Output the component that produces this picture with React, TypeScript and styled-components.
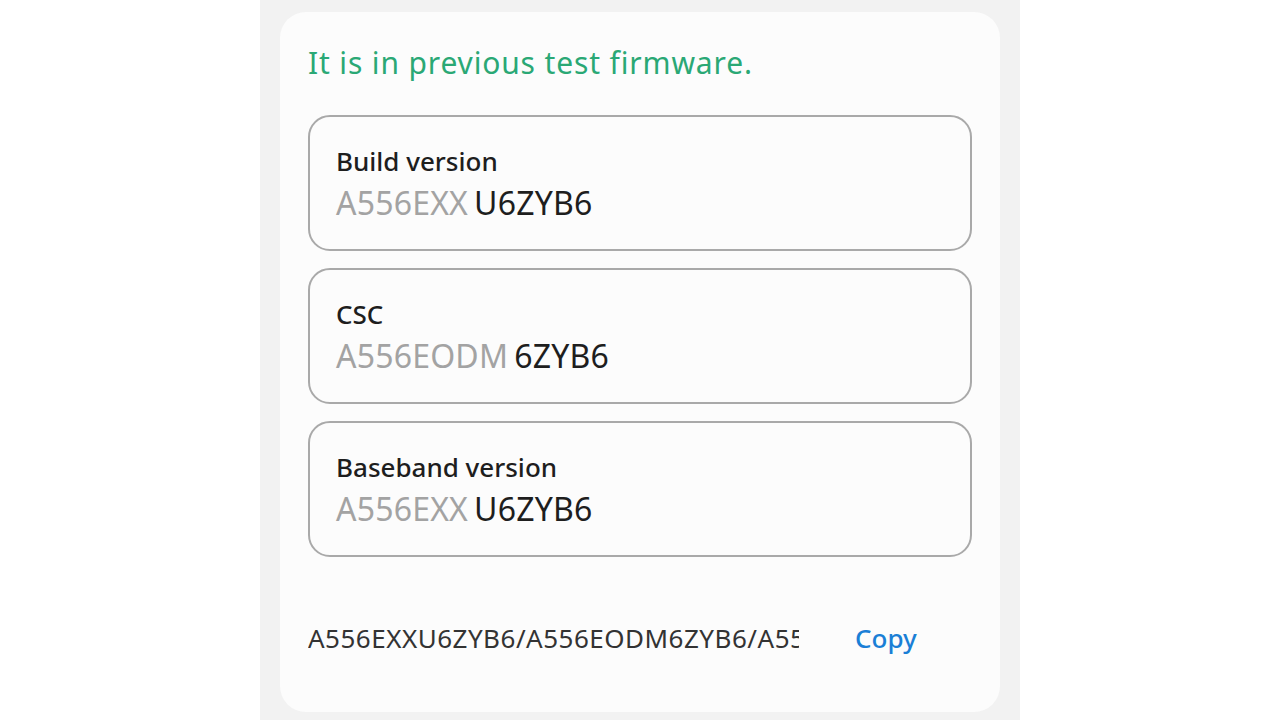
import React from "react";
import styled, { createGlobalStyle } from "styled-components";

const Global = createGlobalStyle`
  html, body { margin: 0; padding: 0; background: #ffffff; }
  body { font-family: "Noto Sans", "Open Sans", sans-serif; }
`;

const Page = styled.div`
  width: 1280px;
  height: 720px;
  display: flex;
  justify-content: center;
  overflow: hidden;
  background: #ffffff;
`;

const Column = styled.div`
  width: 760px;
  height: 720px;
  box-sizing: border-box;
  background: #f2f2f2;
  padding: 12px 20px 8px;
`;

const Card = styled.div`
  height: 700px;
  box-sizing: border-box;
  background: #fcfcfc;
  border-radius: 26px;
  padding: 31px 28px 0;
  display: flex;
  flex-direction: column;
`;

const Title = styled.div`
  color: #2aa875;
  font-size: 30px;
  line-height: 40px;
  letter-spacing: 0.85px;
  margin-bottom: 32px;
`;

const List = styled.div`
  display: flex;
  flex-direction: column;
  gap: 17px;
`;

const Box = styled.div`
  height: 136px;
  box-sizing: border-box;
  border: 2px solid #a9a9a9;
  border-radius: 22px;
  padding: 0 26px;
  display: flex;
  flex-direction: column;
  justify-content: center;
`;

const Label = styled.div`
  color: #1e1e1e;
  font-size: 26px;
  line-height: 36px;
  font-weight: 500;
  margin-bottom: 3px;
`;

const Value = styled.div`
  font-size: 32px;
  line-height: 42px;
  color: #1e1e1e;
  letter-spacing: 0.2px;
`;

const Muted = styled.span`
  color: #a3a3a3;
  margin-right: 6px;
`;

const Footer = styled.div`
  display: flex;
  align-items: center;
  margin-top: 63px;
`;

const Combined = styled.div`
  width: 491px;
  overflow: hidden;
  text-overflow: clip;
  white-space: nowrap;
  color: #333333;
  font-size: 26px;
  line-height: 36px;
  letter-spacing: 0.5px;
`;

const CopyBtn = styled.div`
  margin-left: 56px;
  color: #1a7fd6;
  font-size: 26px;
  line-height: 36px;
  font-weight: 500;
`;

const items = [
  { label: "Build version", prefix: "A556EXX", rest: "U6ZYB6" },
  { label: "CSC", prefix: "A556EODM", rest: "6ZYB6" },
  { label: "Baseband version", prefix: "A556EXX", rest: "U6ZYB6" },
];

export default function App() {
  return (
    <>
      <Global />
      <Page>
        <Column>
          <Card>
            <Title>It is in previous test firmware.</Title>
            <List>
              {items.map((it) => (
                <Box key={it.label}>
                  <Label>{it.label}</Label>
                  <Value>
                    <Muted>{it.prefix}</Muted>
                    {it.rest}
                  </Value>
                </Box>
              ))}
            </List>
            <Footer>
              <Combined>A556EXXU6ZYB6/A556EODM6ZYB6/A556EXXU6ZYB6</Combined>
              <CopyBtn>Copy</CopyBtn>
            </Footer>
          </Card>
        </Column>
      </Page>
    </>
  );
}
